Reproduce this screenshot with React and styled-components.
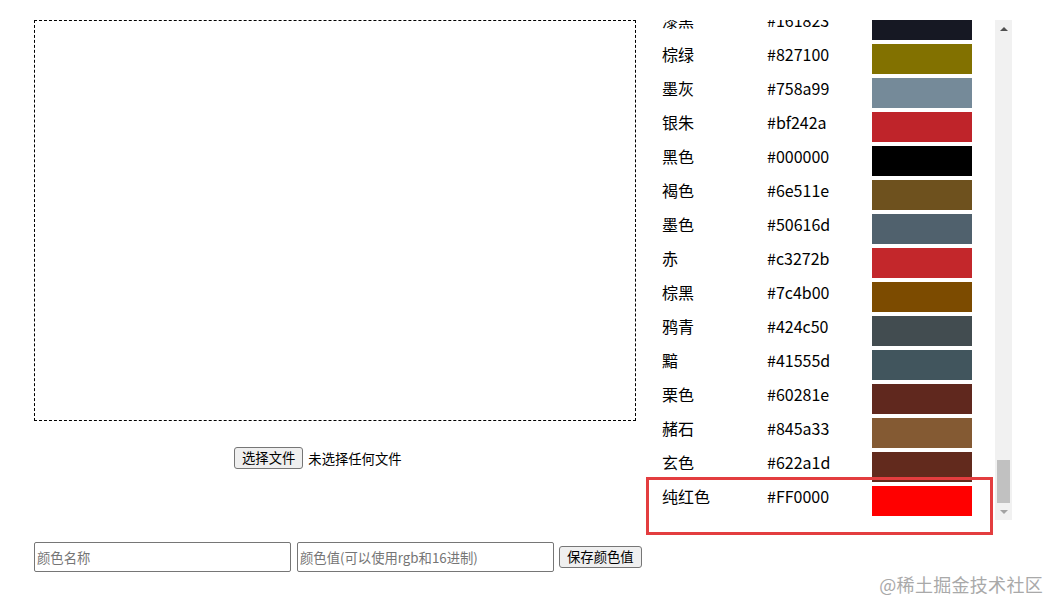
import React, { useEffect, useRef } from 'react'
import styled, { createGlobalStyle } from 'styled-components'

const GlobalStyle = createGlobalStyle`
  html, body {
    margin: 0;
    padding: 0;
    background: #fff;
  }
  body {
    font-family: "Noto Sans CJK SC", "Microsoft YaHei", sans-serif;
    color: #000;
  }
`

// 列表滚到底部时能看到的这一段
const colors = `漆黑 #161823,棕绿 #827100,墨灰 #758a99,银朱 #bf242a,黑色 #000000,褐色 #6e511e,墨色 #50616d,赤 #c3272b,棕黑 #7c4b00,鸦青 #424c50,黯 #41555d,栗色 #60281e,赭石 #845a33,玄色 #622a1d,纯红色 #FF0000`
    .split(',')
    .map(s => {
        const [name, value] = s.split(' ')
        return { name, value }
    })

const Page = styled.div`
    position: relative;
    width: 1061px;
    height: 614px;
    padding: 20px 0 0 34px;
    box-sizing: border-box;
`
const Top = styled.div`
    display: flex;
    align-items: flex-start;
`
const LeftCol = styled.div`
    width: 602px;
    display: flex;
    flex-direction: column;
`
const DropBox = styled.div`
    width: 600px;
    height: 399px;
    border: 1px dashed #000;
`
const FileRow = styled.div`
    width: 202px;
    margin: 26px auto 0;
    display: flex;
    align-items: center;
    gap: 5px;
    font-size: 13.33px;
`
const Button = styled.button`
    font-family: inherit;
    font-size: 13.33px;
    line-height: 18px;
    height: 22px;
    padding: 0 7px;
    background: #efefef;
    color: #000;
    border: 1px solid #767676;
    border-radius: 3px;
    white-space: nowrap;
`
const ListWrap = styled.div`
    position: relative;
    margin-left: 9px;
    display: flex;
    height: 500px;
`
const List = styled.div`
    width: 350px;
    height: 100%;
    overflow: hidden;
    box-sizing: border-box;
    padding-bottom: 2px;
`
const ScrollBar = styled.div`
    width: 17px;
    display: flex;
    flex-direction: column;
    background: #f1f1f1;
`
const Arrow = styled.div`
    height: 17px;
    display: flex;
    align-items: center;
    justify-content: center;
    &::before {
        content: '';
        border-left: 4px solid transparent;
        border-right: 4px solid transparent;
        ${p => p.$down
            ? `border-top: 4px solid #a3a3a3;`
            : `border-bottom: 4px solid #505050;`}
    }
`
const Track = styled.div`
    flex: 1;
    display: flex;
    flex-direction: column;
    justify-content: flex-end;
    padding: 0 2px;
`
const Thumb = styled.div`
    height: 43px;
    background: #c1c1c1;
`
const Row = styled.div`
    display: grid;
    grid-template-columns: 105px 105px 100px;
    align-items: start;
    padding-left: 17px;
    height: 34px;
    font-size: 16px;
    line-height: 25px;
`
const Swatch = styled.div`
    height: 30px;
    margin-top: 2px;
    background: ${p => p.$color};
`
const Highlight = styled.div`
    position: absolute;
    left: 1px;
    top: 457px;
    width: 347px;
    height: 58px;
    box-sizing: border-box;
    border: 3px solid #e33d3f;
    pointer-events: none;
`
const Form = styled.div`
    display: flex;
    align-items: center;
    margin-top: 22px;
`
const Input = styled.input`
    width: 257px;
    height: 30px;
    box-sizing: border-box;
    margin-right: ${p => p.$gap}px;
    padding: 1px 2px;
    font-family: inherit;
    font-size: 13.33px;
    border: 1px solid #767676;
    border-radius: 2px;
    &::placeholder {
        color: #757575;
    }
`
const Watermark = styled.div`
    position: absolute;
    right: 18px;
    top: 571px;
    font-size: 18px;
    color: #a9a9a9;
    letter-spacing: 0.3px;
`

export default function App() {
    const listRef = useRef(null)
    useEffect(() => {
        const el = listRef.current
        if (el) el.scrollTop = el.scrollHeight
    }, [])

    return (
        <Page>
            <GlobalStyle />
            <Top>
                <LeftCol>
                    <DropBox />
                    <FileRow>
                        <Button>选择文件</Button>
                        <span>未选择任何文件</span>
                    </FileRow>
                </LeftCol>
                <ListWrap>
                    <List ref={listRef}>
                        {colors.map((c, i) => (
                            <Row key={i}>
                                <span>{c.name}</span>
                                <span>{c.value}</span>
                                <Swatch $color={c.value} />
                            </Row>
                        ))}
                    </List>
                    <ScrollBar>
                        <Arrow />
                        <Track>
                            <Thumb />
                        </Track>
                        <Arrow $down />
                    </ScrollBar>
                    <Highlight />
                </ListWrap>
            </Top>
            <Form>
                <Input placeholder="颜色名称" $gap={6} />
                <Input placeholder="颜色值(可以使用rgb和16进制)" $gap={5} />
                <Button>保存颜色值</Button>
            </Form>
            <Watermark>@稀土掘金技术社区</Watermark>
        </Page>
    )
}
